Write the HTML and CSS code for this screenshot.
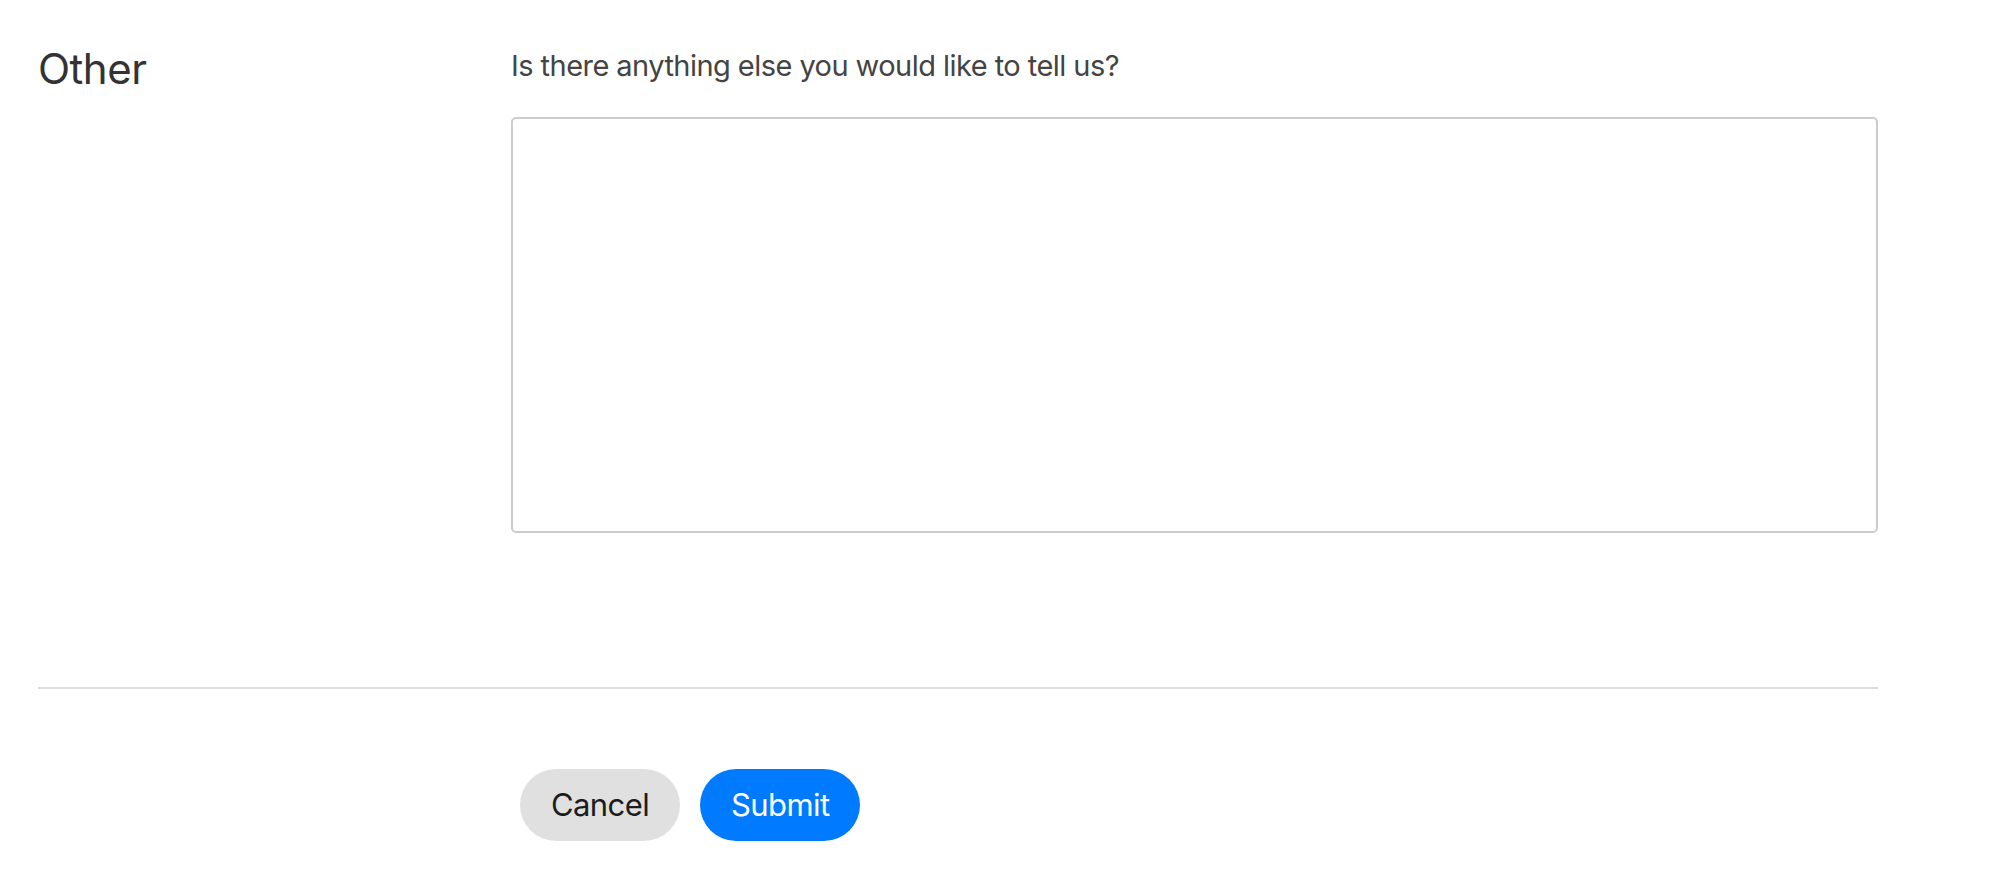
FILE: index.html
```html
<!DOCTYPE html>
<html lang="en">
<head>
<meta charset="utf-8">
<title>Other</title>
<link rel="stylesheet" href="styles.css">
</head>
<body>
<main class="page">
  <section class="section">
    <h2 class="section-title">Other</h2>
    <div class="field">
      <label class="field-label" for="other">Is there anything else you would like to tell us?</label>
      <textarea id="other" class="field-textarea"></textarea>
    </div>
  </section>
  <hr class="divider">
  <div class="actions">
    <button class="btn btn-cancel" type="button">Cancel</button>
    <button class="btn btn-submit" type="submit">Submit</button>
  </div>
</main>
</body>
</html>
```

FILE: styles.css
```css
html, body {
  margin: 0;
  padding: 0;
  background: #ffffff;
}

body {
  font-family: Inter, "Noto Sans", "Liberation Sans", sans-serif;
  color: #333333;
}

.page {
  width: 1840px;
  padding: 44px 0 0 38px;
}

.section {
  display: grid;
  grid-template-columns: 473px 1367px;
}

.section-title {
  margin: 0;
  font-size: 42px;
  line-height: 1.2;
  font-weight: 400;
  color: #333333;
  letter-spacing: -0.5px;
}

.field {
  display: flex;
  flex-direction: column;
  padding-top: 5px;
}

.field-label {
  font-size: 29px;
  line-height: 1.2;
  color: #444444;
  margin-bottom: 33px;
  letter-spacing: -0.55px;
}

.field-textarea {
  box-sizing: border-box;
  width: 1367px;
  height: 416px;
  border: 2px solid #cccccc;
  border-radius: 5px;
  resize: none;
  margin: 0;
  padding: 10px;
  font-family: inherit;
  font-size: 24px;
  outline: none;
}

.divider {
  margin: 154px 0 0 0;
  height: 2px;
  border: 0;
  background: #dddddd;
  width: 1840px;
}

.actions {
  display: flex;
  gap: 20px;
  padding: 80px 0 0 482px;
}

.btn {
  height: 72px;
  padding: 0 31px;
  border: 0;
  border-radius: 36px;
  font-family: inherit;
  font-size: 31px;
  letter-spacing: -0.6px;
  cursor: pointer;
}

.btn-cancel {
  background: #e0e0e0;
  color: #1c1c1c;
}

.btn-submit {
  background: #007aff;
  color: #ffffff;
}
```
